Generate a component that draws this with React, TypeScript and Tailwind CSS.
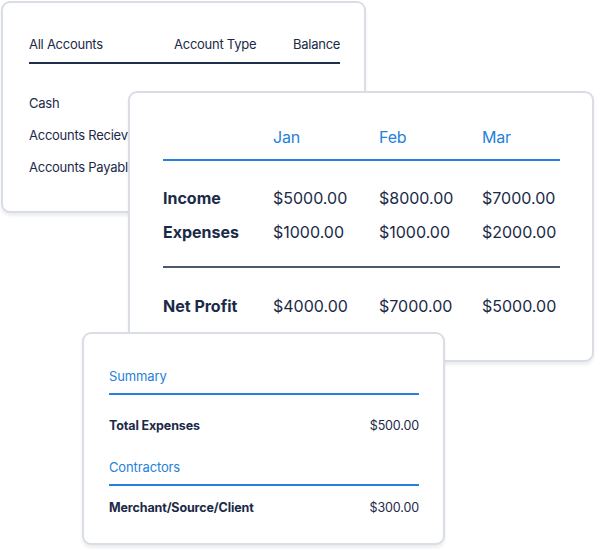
import React from "react";

const navy = "text-[#1b2a48]";

const accounts = ["Cash", "Accounts Recievable", "Accounts Payable"];

const months = ["Jan", "Feb", "Mar"];

const rows = [
  { label: "Income", values: ["$5000.00", "$8000.00", "$7000.00"] },
  { label: "Expenses", values: ["$1000.00", "$1000.00", "$2000.00"] },
];

const netProfit = ["$4000.00", "$7000.00", "$5000.00"];

function Card({
  className,
  children,
}: {
  className: string;
  children: React.ReactNode;
}) {
  return (
    <div
      className={`absolute bg-white border-2 border-[#dadee4] rounded-[9px] shadow-[0_3px_3px_rgba(30,40,60,0.08)] overflow-hidden ${className}`}
    >
      {children}
    </div>
  );
}

export default function App() {
  return (
    <div
      className={`relative w-[600px] h-[550px] bg-white overflow-hidden ${navy}`}
      style={{ fontFamily: "Inter, 'Noto Sans', sans-serif" }}
    >
      {/* Accounts list card */}
      <Card className="left-[1px] top-[1px] w-[365px] h-[212px] pl-[26px] pt-[33px]">
        <div className="grid grid-cols-[145px_119px_1fr] w-[311px] text-[13px] leading-4 tracking-[-0.02em]">
          <span>All Accounts</span>
          <span>Account Type</span>
          <span>Balance</span>
        </div>
        <div className="mt-[10px] h-[2px] w-[311px] bg-[#1e2d4c]" />
        <div className="mt-[31px] flex flex-col gap-4 text-[13px] leading-4 tracking-[-0.02em]">
          {accounts.map((a) => (
            <span key={a}>{a}</span>
          ))}
        </div>
      </Card>

      {/* Monthly profit card */}
      <Card className="left-[128px] top-[91px] w-[466px] h-[271px] pl-[33px] pr-[32px] pt-[34px]">
        <div className="grid grid-cols-[110px_106px_103px_1fr] text-[16px] leading-5 text-[#2581d9] tracking-[-0.01em]">
          <span />
          {months.map((m) => (
            <span key={m}>{m}</span>
          ))}
        </div>
        <div className="mt-3 h-[2px] bg-[#2581d9]" />
        <div className="mt-[27px] flex flex-col gap-[14px] text-[16px] leading-5">
          {rows.map((r) => (
            <div
              key={r.label}
              className="grid grid-cols-[110px_106px_103px_1fr]"
            >
              <span className="font-bold">{r.label}</span>
              {r.values.map((v, i) => (
                <span key={i}>{v}</span>
              ))}
            </div>
          ))}
        </div>
        <div className="mt-6 h-[2px] bg-[#4b5a70]" />
        <div className="mt-[28px] grid grid-cols-[110px_106px_103px_1fr] text-[16px] leading-5">
          <span className="font-bold">Net Profit</span>
          {netProfit.map((v, i) => (
            <span key={i}>{v}</span>
          ))}
        </div>
      </Card>

      {/* Summary card */}
      <Card className="left-[82px] top-[332px] w-[363px] h-[213px] pl-[25px] pr-[24px] pt-[34px]">
        <div className="text-[13px] leading-4 text-[#2581d9] tracking-[-0.01em]">
          Summary
        </div>
        <div className="mt-[9px] h-[2px] bg-[#2581d9]" />
        <div className="mt-[23px] flex justify-between text-[12.5px] leading-4 tracking-[-0.01em]">
          <span className="font-bold">Total Expenses</span>
          <span>$500.00</span>
        </div>
        <div className="mt-[25px] text-[13px] leading-4 text-[#2581d9] tracking-[-0.01em]">
          Contractors
        </div>
        <div className="mt-[9px] h-[2px] bg-[#2581d9]" />
        <div className="mt-[14px] flex justify-between text-[12.5px] leading-4 tracking-[-0.01em]">
          <span className="font-bold">Merchant/Source/Client</span>
          <span>$300.00</span>
        </div>
      </Card>
    </div>
  );
}
